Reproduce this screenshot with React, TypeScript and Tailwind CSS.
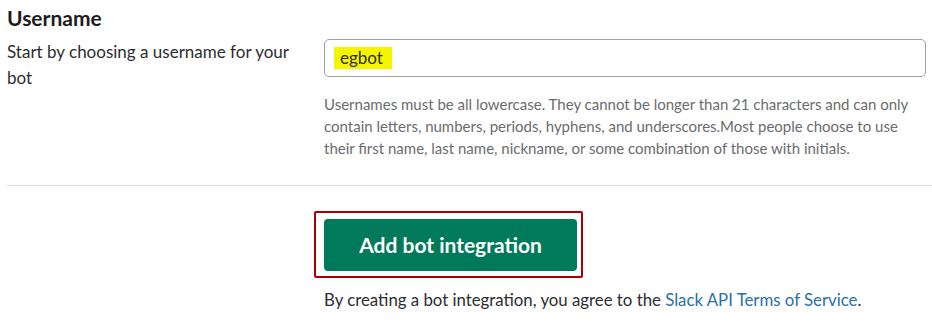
import React from 'react';

export default function App() {
  return (
    <div className="w-[932px] h-[322px] bg-white overflow-hidden font-['Lato','Liberation_Sans',sans-serif] text-[#2c2d30]">
      {/* Username field */}
      <div className="pl-[7px] pt-[3px]">
        <h3 className="text-[21px] leading-[29px] font-bold text-[#1d1c1d]">Username</h3>
        <div className="mt-[7px] grid grid-cols-[317px_602px]">
          <p className="text-[17px] leading-[26px] pr-[20px]">
            Start by choosing a username for your bot
          </p>
          <div>
            <div className="h-[38px] flex items-center pl-[9px] border border-[#a0a0a0] rounded-[5px]">
              <span className="inline-block bg-[#f5f500] pl-[6px] pr-[9px] text-[17px] leading-[22px] text-[#2c2d30]">
                egbot
              </span>
            </div>
            <p className="mt-[16px] pr-[8px] text-[15px] leading-[22px] text-[#6b6c6e]">
              Usernames must be all lowercase. They cannot be longer than 21 characters and can only
              contain letters, numbers, periods, hyphens, and underscores.Most people choose to use
              their first name, last name, nickname, or some combination of those with initials.
            </p>
          </div>
        </div>
      </div>

      <div className="mt-[26px] ml-[7px] border-t border-[#dddddd]" />

      {/* Submit */}
      <div className="mt-[25px] flex flex-col">
        <div className="ml-[314px] w-[269px] border-2 border-[#a80000] rounded-[2px] pt-[6px] pl-[8px] pr-[4px] pb-[5px]">
          <button className="w-[253px] h-[52px] rounded-[4px] bg-[#007a5a] text-white text-[21px] font-bold">
            Add bot integration
          </button>
        </div>
        <p className="mt-[10px] ml-[324px] text-[16.8px] leading-[24px]">
          By creating a bot integration, you agree to the{' '}
          <a className="text-[#2a6fa8]">Slack API Terms of Service</a>.
        </p>
      </div>
    </div>
  );
}
